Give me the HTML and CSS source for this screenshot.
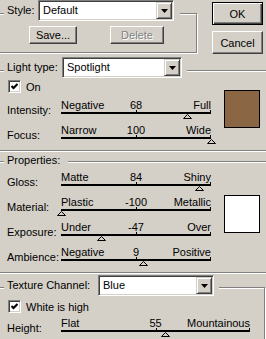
FILE: index.html
```html
<!DOCTYPE html>
<html lang="en">
<head>
  <meta charset="UTF-8" />
  <meta name="viewport" content="width=device-width, initial-scale=1.0" />
  <title>Lighting Effects</title>
  <link rel="stylesheet" href="styles.css">
</head>
<body>
  <div id="dialog">
    <div id="top">
      <div class="group style-group">
        <div class="group-head">
          <span class="group-label">Style:</span>
          <div class="select">
            <span class="select-value">Default</span>
            <span class="select-btn"><svg width="7" height="4" viewBox="0 0 7 4"><polygon points="0,0 7,0 3.5,4" fill="#000"/></svg></span>
          </div>
        </div>
        <div class="style-buttons">
          <button class="btn save">Save...</button>
          <button class="btn delete" disabled>Delete</button>
        </div>
      </div>
      <div id="actions">
        <button class="btn default">OK</button>
        <button class="btn">Cancel</button>
      </div>
    </div>

    <div class="group light-group">
      <div class="group-head">
        <span class="group-label">Light type:</span>
        <div class="select">
          <span class="select-value">Spotlight</span>
          <span class="select-btn"><svg width="7" height="4" viewBox="0 0 7 4"><polygon points="0,0 7,0 3.5,4" fill="#000"/></svg></span>
        </div>
      </div>
      <div class="group-body">
        <div class="controls">
          <div class="check-row">
            <span class="checkbox"><svg width="7" height="7" viewBox="0 0 7 7"><polyline points="0.5,3 2.5,5 6.5,1" fill="none" stroke="#000" stroke-width="2"/></svg></span>
            <span>On</span>
          </div>
          <div class="slider-row first">
            <span class="slider-label">Intensity:</span>
            <div class="slider">
              <div class="slider-text"><span>Negative</span><span>68</span><span>Full</span></div>
              <div class="slider-track">
                <span class="tick tick-mid"></span><span class="tick tick-end"></span>
                <svg class="thumb" style="left:84%" width="9" height="5" viewBox="0 0 9 5"><polygon points="4.5,0.5 8.5,4.5 0.5,4.5" fill="#d4d0c8" stroke="#000"/></svg>
              </div>
            </div>
          </div>
          <div class="slider-row">
            <span class="slider-label">Focus:</span>
            <div class="slider">
              <div class="slider-text"><span>Narrow</span><span>100</span><span>Wide</span></div>
              <div class="slider-track">
                <span class="tick tick-mid"></span><span class="tick tick-end"></span>
                <svg class="thumb" style="left:100%" width="9" height="5" viewBox="0 0 9 5"><polygon points="4.5,0.5 8.5,4.5 0.5,4.5" fill="#d4d0c8" stroke="#000"/></svg>
              </div>
            </div>
          </div>
        </div>
        <div class="swatch light-swatch"></div>
      </div>
    </div>

    <div class="group props-group">
      <div class="group-head">
        <span class="group-label">Properties:</span>
      </div>
      <div class="group-body">
        <div class="controls">
          <div class="slider-row">
            <span class="slider-label">Gloss:</span>
            <div class="slider">
              <div class="slider-text"><span>Matte</span><span>84</span><span>Shiny</span></div>
              <div class="slider-track">
                <span class="tick tick-mid"></span><span class="tick tick-end"></span>
                <svg class="thumb" style="left:92%" width="9" height="5" viewBox="0 0 9 5"><polygon points="4.5,0.5 8.5,4.5 0.5,4.5" fill="#d4d0c8" stroke="#000"/></svg>
              </div>
            </div>
          </div>
          <div class="slider-row">
            <span class="slider-label">Material:</span>
            <div class="slider">
              <div class="slider-text"><span>Plastic</span><span>-100</span><span>Metallic</span></div>
              <div class="slider-track">
                <span class="tick tick-mid"></span><span class="tick tick-end"></span>
                <svg class="thumb" style="left:0%" width="9" height="5" viewBox="0 0 9 5"><polygon points="4.5,0.5 8.5,4.5 0.5,4.5" fill="#d4d0c8" stroke="#000"/></svg>
              </div>
            </div>
          </div>
          <div class="slider-row">
            <span class="slider-label">Exposure:</span>
            <div class="slider">
              <div class="slider-text"><span>Under</span><span>-47</span><span>Over</span></div>
              <div class="slider-track">
                <span class="tick tick-mid"></span><span class="tick tick-end"></span>
                <svg class="thumb" style="left:26.5%" width="9" height="5" viewBox="0 0 9 5"><polygon points="4.5,0.5 8.5,4.5 0.5,4.5" fill="#d4d0c8" stroke="#000"/></svg>
              </div>
            </div>
          </div>
          <div class="slider-row">
            <span class="slider-label">Ambience:</span>
            <div class="slider">
              <div class="slider-text"><span>Negative</span><span>9</span><span>Positive</span></div>
              <div class="slider-track">
                <span class="tick tick-mid"></span><span class="tick tick-end"></span>
                <svg class="thumb" style="left:54.5%" width="9" height="5" viewBox="0 0 9 5"><polygon points="4.5,0.5 8.5,4.5 0.5,4.5" fill="#d4d0c8" stroke="#000"/></svg>
              </div>
            </div>
          </div>
        </div>
        <div class="swatch props-swatch"></div>
      </div>
    </div>

    <div class="group texture-group">
      <div class="group-head">
        <span class="group-label">Texture Channel:</span>
        <div class="select">
          <span class="select-value">Blue</span>
          <span class="select-btn"><svg width="7" height="4" viewBox="0 0 7 4"><polygon points="0,0 7,0 3.5,4" fill="#000"/></svg></span>
        </div>
      </div>
      <div class="check-row">
        <span class="checkbox"><svg width="7" height="7" viewBox="0 0 7 7"><polyline points="0.5,3 2.5,5 6.5,1" fill="none" stroke="#000" stroke-width="2"/></svg></span>
        <span>White is high</span>
      </div>
      <div class="slider-row">
        <span class="slider-label">Height:</span>
        <div class="slider wide">
          <div class="slider-text"><span>Flat</span><span>55</span><span>Mountainous</span></div>
          <div class="slider-track">
            <span class="tick tick-mid"></span><span class="tick tick-end"></span>
            <svg class="thumb" style="left:55%" width="9" height="5" viewBox="0 0 9 5"><polygon points="4.5,0.5 8.5,4.5 0.5,4.5" fill="#d4d0c8" stroke="#000"/></svg>
          </div>
        </div>
      </div>
    </div>
  </div>
</body>
</html>
```

FILE: styles.css
```css
body {
  margin: 0;
  background: #d4d0c8;
  font-family: 'Liberation Sans', Arial, sans-serif;
  font-size: 11px;
  color: #000;
  overflow: hidden;
}
#dialog {
  width: 266px;
  height: 339px;
  overflow: hidden;
}
#top {
  display: flex;
  align-items: flex-start;
  height: 53px;
}

/* etched group boxes */
.group {
  box-sizing: border-box;
  flex-shrink: 0;
  margin-left: -10px;
  padding-left: 16px;
  border: 1px solid #808080;
  box-shadow: 1px 1px 0 #fff, inset 1px 1px 0 #fff;
}
.group-head {
  display: flex;
  align-items: center;
  width: fit-content;
  margin: -14px 0 0 -3px;
  padding: 0 5px 0 3px;
  background: #d4d0c8;
}
.group-label {
  line-height: 13px;
  white-space: nowrap;
}
.style-group {
  width: 207px;
  height: 40px;
  margin-top: 13px;
}
.style-group .group-head {
  padding-right: 6px;
}
.style-group .group-label {
  width: 31px;
}
.style-group .select {
  width: 136px;
}
.light-group {
  width: 290px;
  height: 81px;
  margin-top: 17px;
}
.light-group .group-label {
  width: 55px;
}
.light-group .select {
  width: 120px;
}
.props-group {
  width: 290px;
  height: 112px;
  margin-top: 10px;
}
.props-group .group-head {
  margin-top: -8px;
  padding-right: 0;
}
.props-group .group-label {
  width: 61px;
}
.texture-group {
  width: 275px;
  height: 80px;
  margin-top: 14px;
}
.texture-group .group-head {
  margin-top: -13px;
}
.texture-group .group-label {
  width: 91px;
}
.texture-group .select {
  width: 116px;
}

/* combo boxes */
.select {
  box-sizing: border-box;
  display: flex;
  height: 21px;
  padding: 1px;
  background: #fff;
  border: 1px solid;
  border-color: #808080 #fff #fff #808080;
  box-shadow: inset 1px 1px 0 #404040, inset -1px -1px 0 #d4d0c8;
}
.select-value {
  flex: 1;
  padding-left: 3px;
  line-height: 17px;
}
.select-btn {
  box-sizing: border-box;
  display: flex;
  align-items: center;
  justify-content: center;
  width: 16px;
  height: 17px;
  background: #d4d0c8;
  border: 1px solid;
  border-color: #d4d0c8 #404040 #404040 #d4d0c8;
  box-shadow: inset 1px 1px 0 #fff, inset -1px -1px 0 #808080;
}

/* push buttons */
.btn {
  box-sizing: border-box;
  margin: 0;
  padding: 0;
  font: inherit;
  color: #000;
  background: #d4d0c8;
  border: 1px solid;
  border-color: #fff #404040 #404040 #fff;
  box-shadow: inset -1px -1px 0 #808080;
}
.style-buttons {
  display: flex;
  gap: 33px;
  margin-top: 5px;
  padding-left: 22px;
}
.style-buttons .btn {
  height: 18px;
}
.save {
  width: 48px;
}
.delete {
  width: 54px;
  color: #808080;
  text-shadow: 1px 1px 0 #fff;
}
#actions {
  display: flex;
  flex-direction: column;
  gap: 6px;
  margin: 2px 0 0 15px;
}
#actions .btn {
  width: 51px;
  height: 23px;
}
#actions .default {
  border-color: #000;
  box-shadow: inset 1px 1px 0 #fff, inset -1px -1px 0 #404040, inset -2px -2px 0 #808080;
}

/* rows */
.group-body {
  display: flex;
}
.light-group .group-body {
  margin-top: 2px;
}
.props-group .group-body {
  margin-top: 4px;
}
.controls {
  width: 204px;
}
.check-row {
  display: flex;
  align-items: center;
  gap: 5px;
  height: 13px;
  padding-left: 1px;
}
.texture-group .check-row {
  margin-top: 4px;
}
.checkbox {
  box-sizing: border-box;
  display: flex;
  align-items: center;
  justify-content: center;
  width: 13px;
  height: 13px;
  background: #fff;
  border: 1px solid;
  border-color: #808080 #fff #fff #808080;
  box-shadow: inset 1px 1px 0 #404040, inset -1px -1px 0 #d4d0c8;
}
.swatch {
  box-sizing: border-box;
  width: 36px;
  height: 38px;
  margin-left: 13px;
  border: 1px solid #000;
}
.light-swatch {
  margin-top: 10px;
  background: #8b6645;
}
.props-swatch {
  margin-top: 24px;
  background: #fff;
}

/* sliders */
.slider-row {
  display: flex;
  height: 25px;
}
.slider-row.first {
  margin-top: 6px;
}
.texture-group .slider-row {
  margin-top: 4px;
}
.slider-label {
  width: 54px;
  padding-top: 5px;
  line-height: 13px;
}
.slider {
  width: 150px;
}
.slider.wide {
  width: 189px;
}
.slider-text {
  display: grid;
  grid-template-columns: minmax(0, 1fr) auto minmax(0, 1fr);
  line-height: 13px;
  white-space: nowrap;
}
.slider-text span:last-child {
  justify-self: end;
}
.slider-track {
  position: relative;
  height: 2px;
  background: #000;
}
.tick {
  position: absolute;
  bottom: 2px;
  width: 1px;
  height: 2px;
  background: #000;
}
.tick-mid {
  left: 50%;
}
.tick-end {
  right: 0;
}
.thumb {
  position: absolute;
  top: 2px;
  margin-left: -4px;
  display: block;
}
```
